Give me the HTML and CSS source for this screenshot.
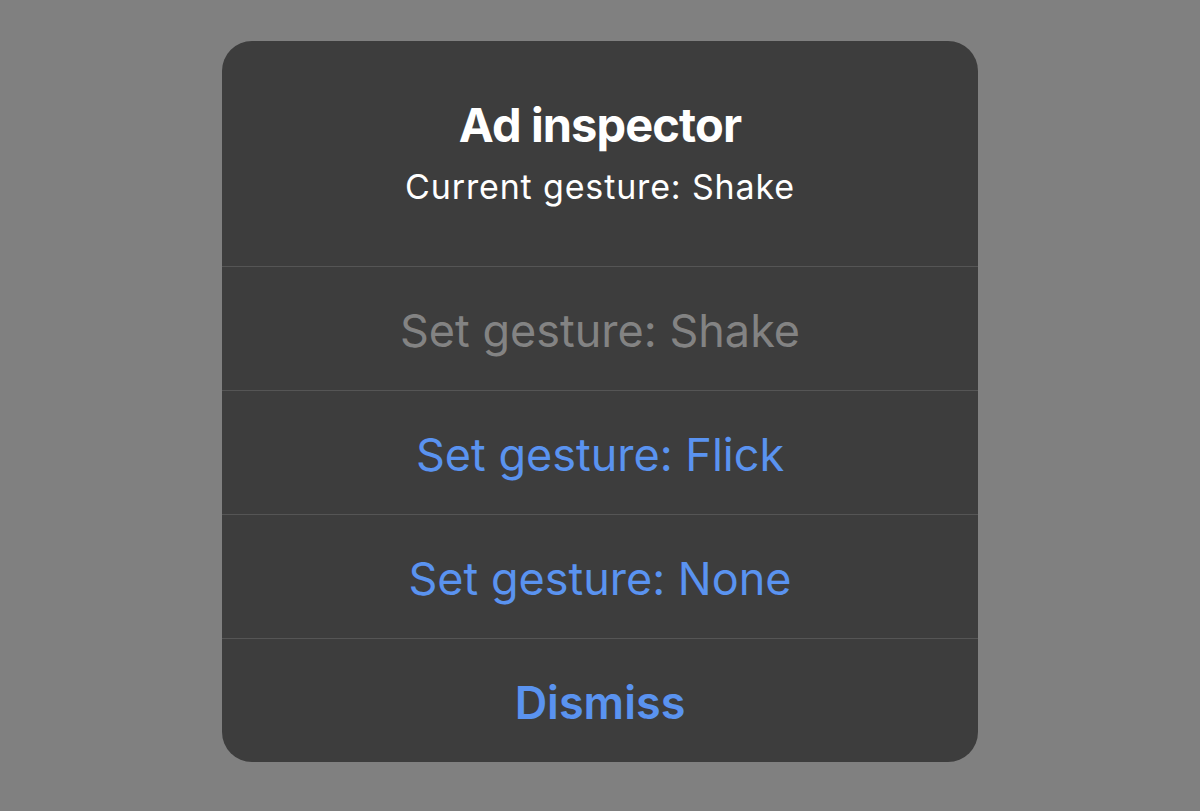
FILE: index.html
```html
<!DOCTYPE html>
<html>
<head>
<meta charset="utf-8">
<link rel="stylesheet" href="styles.css">
</head>
<body>
<div class="page">
  <div class="alert">
    <div class="header">
      <div class="title">Ad inspector</div>
      <div class="message">Current gesture: Shake</div>
    </div>
    <div class="action disabled">Set gesture: Shake</div>
    <div class="action">Set gesture: Flick</div>
    <div class="action">Set gesture: None</div>
    <div class="action bold">Dismiss</div>
  </div>
</div>
</body>
</html>
```
FILE: styles.css
```css
html, body {
  margin: 0;
  padding: 0;
  background: #808080;
  font-family: Inter, "Noto Sans", sans-serif;
}
.page {
  width: 1200px;
  height: 811px;
  display: flex;
  justify-content: center;
  padding-top: 41px;
  box-sizing: border-box;
}
.alert {
  width: 756px;
  height: 721px;
  background: #3d3d3d;
  border-radius: 30px;
  overflow: hidden;
  display: flex;
  flex-direction: column;
}
.header {
  height: 225px;
  box-sizing: border-box;
  padding-top: 56px;
  text-align: center;
  color: #fff;
}
.title {
  font-size: 47px;
  font-weight: 700;
  line-height: 56px;
  letter-spacing: -0.9px;
}
.message {
  font-size: 34px;
  line-height: 40px;
  margin-top: 14px;
  letter-spacing: 0.85px;
}
.action {
  flex: 1;
  border-top: 1px solid #555555;
  display: flex;
  align-items: center;
  justify-content: center;
  padding-top: 4px;
  font-size: 45px;
  color: #5a93f0;
}
.action.disabled {
  color: #838383;
}
.action.bold {
  font-weight: 600;
}
```
